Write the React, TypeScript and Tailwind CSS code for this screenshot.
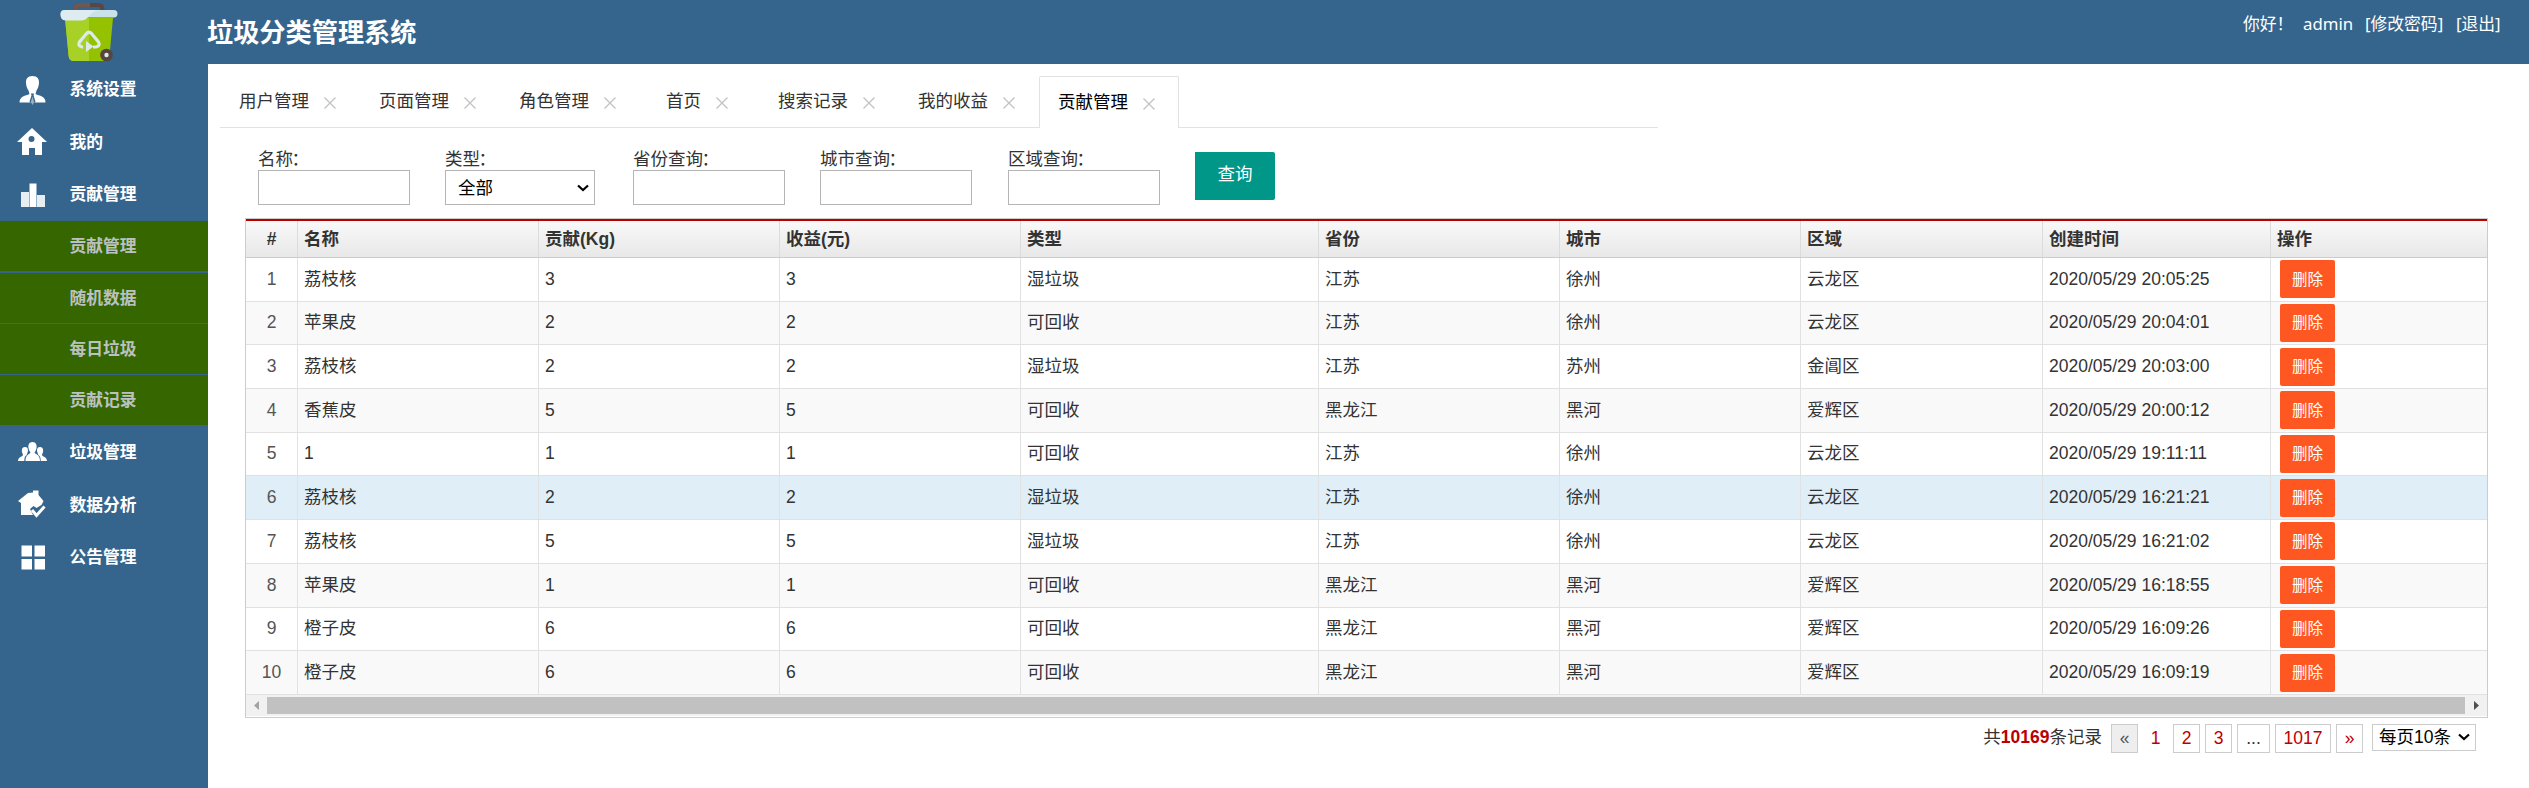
import React from 'react';

const CJK = "font-['Liberation_Sans','Noto_Sans_CJK_SC',sans-serif]";

function TrashLogo() {
  return (
    <svg width="60" height="60" viewBox="0 0 60 60">
      <path d="M15.500 10V7q0-4 4-4h19q4 0 4 4v3" fill="none" stroke="#5a4642" strokeWidth="4" />
      <path d="M15.500 10V7q0-4 4-4H30" fill="none" stroke="#74564d" strokeWidth="4" />
      <path d="M5 16h48l-3.500 38q-.5 5-5 5H14q-5 0-5.400-5z" fill="#94c100" />
      <path d="M5 16h24v43H14q-5 0-5.400-5z" fill="#a7d126" />
      <rect x="0.500" y="8" width="57" height="7.500" rx="3.700" fill="#c9e2ea" />
      <path d="M6 8h33q-6 1-9 5-4 5.500-9 5.500H5.500q-5-.5-5-5.500t5.500-5z" fill="#deebf1" />
      <path d="M23 45h-1q-4.500-1-2.500-5l7-8.500q2.500-2.500 5 0l7 8.500q2 4-2.500 5h-3" fill="none" stroke="#dcebea" strokeWidth="3.200" />
      <path d="M26 39l7.500 5.500-7.500 5.500z" fill="#dcebea" />
      <circle cx="46.500" cy="53" r="6.300" fill="#574540" />
      <circle cx="46.500" cy="53" r="2.200" fill="#dcebea" />
    </svg>
  );
}

const icons: Record<string, React.ReactNode> = {
  user: (
    <>
      <path d="M15.500 1c5 0 6.700 3 6.500 7-.2 3-1.200 6-2.500 7.500l-1 3.500c4 2 10 2 10 8.500h-26c0-6.500 6-6.500 10-8.500l-1-3.500C10.200 14 9.200 11 9 8c-.2-4 1.500-7 6.500-7z" fill="#fff" />
      <path d="M14 18.500h3l-.5 2 2 6-3 3.500-3-3.500 2-6z" fill="#35658d" />
      <path d="M15.500 21.500l1.700 5.500-1.700 3-1.700-3z" fill="#fff" opacity=".5" />
    </>
  ),
  home: <path fillRule="evenodd" d="M15 1l15 14h-5v13h-7v-7h-6v7H5V15H0zM14.500 9a3 3 0 100 6 3 3 0 000-6z" fill="#fff" />,
  chart: (
    <>
      <path d="M4 12h8v15H4zM20 15h8v12h-8z" fill="#e6edf3" />
      <path d="M12.500 3.500h7V27h-7z" fill="#fff" />
    </>
  ),
  users: (
    <g fill="#fff">
      <path d="M15.500 4c3.500 0 4.500 3 4 6-.3 2-1 3-2 4.500 1 2 5.500 2 5.500 8.500H8.500c0-6.500 4-6.500 5-8.500-1-1.500-1.700-2.500-2-4.500-.5-3 .5-6 4-6z" />
      <path d="M8 9c2 0 3 1 3 3.500-.2 2.500-1.200 3-1.200 4.500-2 1-2.500 3-2.500 6H1c0-4 4-4 5-6 0-1-1-2-1.200-4C4.700 10 6 9 8 9zM23 9c-2 0-3 1-3 3.500.2 2.500 1.200 3 1.200 4.500 2 1 2.500 3 2.500 6H30c0-4-4-4-5-6 0-1 1-2 1.200-4C26.300 10 25 9 23 9z" />
    </g>
  ),
  analysis: (
    <>
      <path d="M1 11L11 3l5-.5V.500h5.500V5l5 6-2 4-5 3-3-2-3.500 3 3 6H4V13z" fill="#fff" />
      <path d="M15 20l4.500 5.500 8-9" fill="none" stroke="#fff" strokeWidth="3" />
    </>
  ),
  grid: <path d="M4.500 2.500h10.500v11H4.500zM17.500 2.500H28v11H17.500zM4.500 16h10.500v10.500H4.500zM17.500 16H28v10.500H17.500z" fill="#fff" />,
};

function MenuItem({ icon, label }: { icon: string; label: string }) {
  return (
    <div className="flex h-[52.5px] items-center pl-[17px]">
      <svg width="30" height="30" viewBox="0 0 30 30">{icons[icon]}</svg>
      <span className="ml-[22.5px] text-[16.8px] font-bold text-white">{label}</span>
    </div>
  );
}

function SubItem({ label, gap }: { label: string; gap: string }) {
  return (
    <div className={`flex h-[50px] items-center bg-[#366600] pt-[2px] pl-[69.5px] text-[16.8px] font-bold text-[#bcc2c0] ${gap}`}>
      {label}
    </div>
  );
}

const tabs = [
  { label: '用户管理', w: 'w-[140px]' },
  { label: '页面管理', w: 'w-[140px]' },
  { label: '角色管理', w: 'w-[140px]' },
  { label: '首页', w: 'w-[119px]' },
  { label: '搜索记录', w: 'w-[140px]' },
  { label: '我的收益', w: 'w-[140px]' },
];

function Cross() {
  return (
    <svg width="12" height="12" viewBox="0 0 12 12" className="mt-[2px]">
      <path d="M.5.5l11 11M11.500.5l-11 11" stroke="#c2c2c2" strokeWidth="1.300" />
    </svg>
  );
}

function Chevron() {
  return (
    <svg width="12" height="8" viewBox="0 0 12 8">
      <path d="M1 1.500l5 4.500 5-4.500" fill="none" stroke="#000" strokeWidth="2.200" />
    </svg>
  );
}

function Label({ text }: { text: string }) {
  return (
    <div className="h-[23px] pt-px leading-[23px] whitespace-nowrap">
      {text}
      <span className="-ml-[1.5px]">：</span>
    </div>
  );
}

function Field({ label, mr }: { label: string; mr: string }) {
  return (
    <div className={`w-[152px] ${mr}`}>
      <Label text={label} />
      <div className="h-[35px] border border-[#b5b5b5] bg-white" />
    </div>
  );
}

const cols = ['#', '名称', '贡献(Kg)', '收益(元)', '类型', '省份', '城市', '区域', '创建时间', '操作'];
const grid = 'grid grid-cols-[52px_241px_241px_241px_298px_241px_241px_242px_228px_1fr]';

const rows = [
  ['荔枝核', '3', '3', '湿垃圾', '江苏', '徐州', '云龙区', '2020/05/29 20:05:25'],
  ['苹果皮', '2', '2', '可回收', '江苏', '徐州', '云龙区', '2020/05/29 20:04:01'],
  ['荔枝核', '2', '2', '湿垃圾', '江苏', '苏州', '金阊区', '2020/05/29 20:03:00'],
  ['香蕉皮', '5', '5', '可回收', '黑龙江', '黑河', '爱辉区', '2020/05/29 20:00:12'],
  ['1', '1', '1', '可回收', '江苏', '徐州', '云龙区', '2020/05/29 19:11:11'],
  ['荔枝核', '2', '2', '湿垃圾', '江苏', '徐州', '云龙区', '2020/05/29 16:21:21'],
  ['荔枝核', '5', '5', '湿垃圾', '江苏', '徐州', '云龙区', '2020/05/29 16:21:02'],
  ['苹果皮', '1', '1', '可回收', '黑龙江', '黑河', '爱辉区', '2020/05/29 16:18:55'],
  ['橙子皮', '6', '6', '可回收', '黑龙江', '黑河', '爱辉区', '2020/05/29 16:09:26'],
  ['橙子皮', '6', '6', '可回收', '黑龙江', '黑河', '爱辉区', '2020/05/29 16:09:19'],
];

function rowColor(i: number) {
  if (i === 5) return 'bg-[#e0eef7]';
  return i % 2 ? 'bg-[#f9f9f9]' : 'bg-white';
}

function PageBox({ children, cls }: { children: React.ReactNode; cls: string }) {
  return <div className={`flex h-[29px] items-center justify-center border ${cls}`}>{children}</div>;
}

export default function App() {
  return (
    <div className={`flex h-[788px] w-[2529px] flex-col overflow-hidden bg-[#35658d] ${CJK}`}>
      <header className="flex h-16 shrink-0">
        <div className="w-[207px] pt-[2px] pl-[60px]"><TrashLogo /></div>
        <h1 className="flex-1 pt-[14px] text-[26.2px] leading-[38px] font-bold text-white">垃圾分类管理系统</h1>
        <div className="flex pt-[12px] pr-[25px] font-['Noto_Sans','Noto_Sans_CJK_SC',sans-serif] text-[16.8px] leading-[24px] whitespace-nowrap text-white">
          <span className="w-[60px]">你好！</span>
          <span className="w-[62px]">admin</span>
          <span className="w-[91px]">[修改密码]</span>
          <span className="w-[48px]">[退出]</span>
        </div>
      </header>
      <div className="flex min-h-0 flex-1">
        <nav className="w-[208px] shrink-0">
          <div className="-mt-[0.5px]">
            <MenuItem icon="user" label="系统设置" />
            <MenuItem icon="home" label="我的" />
            <MenuItem icon="chart" label="贡献管理" />
          </div>
          <div>
            <SubItem label="贡献管理" gap="mb-[2px]" />
            <SubItem label="随机数据" gap="mb-px" />
            <SubItem label="每日垃圾" gap="mb-px" />
            <SubItem label="贡献记录" gap="mb-0" />
          </div>
          <div className="mt-[1.5px]">
            <MenuItem icon="users" label="垃圾管理" />
            <MenuItem icon="analysis" label="数据分析" />
            <MenuItem icon="grid" label="公告管理" />
          </div>
        </nav>
        <main className="flex-1 bg-white text-[17.5px] text-[#333]">
          <div className="ml-3 flex h-16 w-[1438px] pt-3">
            {tabs.map((t) => (
              <div key={t.label} className={`flex items-center justify-center gap-[15px] border-b border-[#e2e2e2] pr-[5px] ${t.w}`}>
                <span>{t.label}</span>
                <Cross />
              </div>
            ))}
            <div className="flex w-[140px] items-center justify-center gap-[15px] rounded-t-[2px] border border-b-0 border-[#e2e2e2] pr-[5px] text-black">
              <span>贡献管理</span>
              <Cross />
            </div>
            <div className="flex-1 border-b border-[#e2e2e2]" />
          </div>
          <div className="flex h-[90px] pt-[19px] pl-[50px]">
            <Field label="名称" mr="mr-[35px]" />
            <div className="mr-[38px] w-[150px]">
              <Label text="类型" />
              <div className="flex h-[35px] items-center justify-between border border-[#b5b5b5] pt-px pr-[5px] pl-[12px] text-black">
                全部
                <Chevron />
              </div>
            </div>
            <Field label="省份查询" mr="mr-[35px]" />
            <Field label="城市查询" mr="mr-[36px]" />
            <Field label="区域查询" mr="mr-[35px]" />
            <div className="mt-[5px] flex h-12 w-20 items-center justify-center rounded-r-[2px] bg-[#009688] pb-[3px] text-white">查询</div>
          </div>
          <div className="ml-[37px] h-[500px] w-[2243px] border border-[#ccc]">
            <div className={`${grid} h-[39px] border-t-2 border-b border-t-[#b00] border-b-[#ccc] bg-linear-to-b from-[#f9f9f9] to-[#e8e8e8] font-bold`}>
              {cols.map((c, i) => (
                <div key={c} className={`flex items-center ${i === 0 ? 'justify-center' : 'pl-[6px]'} ${i < 9 ? 'border-r border-[#dcdcdc]' : ''}`}>{c}</div>
              ))}
            </div>
            {rows.map((r, i) => (
              <div key={i} className={`${grid} h-[43.7px] border-b border-[#e1e1e1] ${rowColor(i)}`}>
                <div className="flex items-center justify-center border-r border-[#e1e1e1] pb-px text-[#555]">{i + 1}</div>
                {r.map((v, j) => (
                  <div key={j} className="flex items-center border-r border-[#e1e1e1] pb-px pl-[6px]">{v}</div>
                ))}
                <div className="flex items-center pl-[9px]">
                  <div className="flex h-[38px] w-[55px] items-center justify-center rounded-[2px] bg-[#ff5722] text-[15.5px] text-white">删除</div>
                </div>
              </div>
            ))}
            <div className="flex h-[21px] items-center bg-[#f1f1f1]">
              <svg width="21" height="17" viewBox="0 0 21 17"><path d="M13 4v9L8 8.500z" fill="#a3a3a3" /></svg>
              <div className="h-[17px] flex-1 bg-[#c1c1c1]" />
              <svg width="22" height="17" viewBox="0 0 22 17"><path d="M9 4v9l5-4.500z" fill="#505050" /></svg>
            </div>
          </div>
          <div className="flex justify-end pt-[6px] pr-[53px]">
            <div className="mr-[9px] leading-[27px]">共<b className="text-[#b00]">10169</b>条记录</div>
            <PageBox cls="mr-[4px] w-[27px] border-[#ccc] bg-[#eee] text-[#555]">«</PageBox>
            <PageBox cls="mr-[4px] w-[27px] border-transparent text-[#b00]">1</PageBox>
            <PageBox cls="mr-[5px] w-[27px] border-[#ccc] text-[#b00]">2</PageBox>
            <PageBox cls="mr-[5px] w-[27px] border-[#ccc] text-[#b00]">3</PageBox>
            <PageBox cls="mr-[5px] w-[33px] border-[#ccc]">...</PageBox>
            <PageBox cls="mr-[5px] w-[56px] border-[#ccc] text-[#b00]">1017</PageBox>
            <PageBox cls="mr-[9px] w-[27px] border-[#ccc] text-[#b00]">»</PageBox>
            <div className="flex h-[27px] w-[104px] items-center justify-between border border-[#ccc] pr-[5px] pb-px pl-[6px] text-black">
              每页10条
              <Chevron />
            </div>
          </div>
        </main>
      </div>
    </div>
  );
}
